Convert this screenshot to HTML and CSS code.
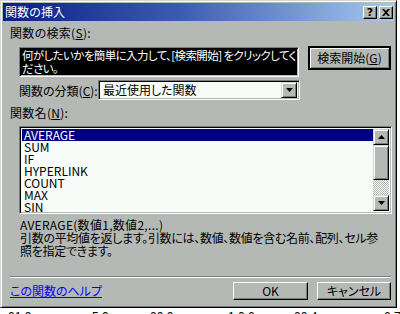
FILE: index.html
```html
<!DOCTYPE html>
<html lang="ja">
<head>
  <meta charset="UTF-8" />
  <title>関数の挿入</title>
  <link rel="stylesheet" href="styles.css">
</head>
<body>
  <div class="dialog">
    <div class="titlebar">
      <span class="title">関数の挿入</span>
      <div class="title-buttons">
        <div class="tbtn">?</div>
        <div class="tbtn">
          <svg width="8" height="7" viewBox="0 0 8 7"><path d="M0 0h2l2 2 2-2h2L5 3.5 8 7H6L4 5 2 7H0l3-3.5z" fill="#000"/></svg>
        </div>
      </div>
    </div>

    <div class="content">
      <!-- Search -->
      <div class="label">関数の検索(<u>S</u>):</div>
      <div class="search-row">
        <div class="field search-box">何がしたいかを簡単に入力して、[検索開始] をクリックしてく<br>ださい。</div>
        <div class="btn default-btn">検索開始(<u>G</u>)</div>
      </div>

      <!-- Category -->
      <div class="category-row">
        <span class="cat-label">関数の分類(<u>C</u>):</span>
        <div class="field combo">
          <span class="combo-text">最近使用した関数</span>
          <div class="combo-btn">
            <svg width="7" height="4" viewBox="0 0 7 4"><path d="M0 0h7L3.5 4z" fill="#000"/></svg>
          </div>
        </div>
      </div>

      <!-- Function list -->
      <div class="label list-label">関数名(<u>N</u>):</div>
      <div class="field list">
        <div class="rows">
          <div class="row selected">AVERAGE</div>
          <div class="row">SUM</div>
          <div class="row">IF</div>
          <div class="row">HYPERLINK</div>
          <div class="row">COUNT</div>
          <div class="row">MAX</div>
          <div class="row">SIN</div>
        </div>
        <div class="scrollbar">
          <div class="sb-btn">
            <svg width="7" height="4" viewBox="0 0 7 4"><path d="M0 4h7L3.5 0z" fill="#000"/></svg>
          </div>
          <div class="sb-thumb"></div>
          <div class="sb-track"></div>
          <div class="sb-btn">
            <svg width="7" height="4" viewBox="0 0 7 4"><path d="M0 0h7L3.5 4z" fill="#000"/></svg>
          </div>
        </div>
      </div>

      <!-- Description -->
      <div class="syntax">AVERAGE(数値1,数値2,...)</div>
      <div class="desc">引数の平均値を返します。引数には、数値、数値を含む名前、配列、セル参<br>照を指定できます。</div>

      <div class="separator"></div>

      <div class="footer">
        <a class="help-link" href="#">この関数のヘルプ</a>
        <div class="footer-buttons">
          <div class="btn ok-btn">OK</div>
          <div class="btn cancel-btn">キャンセル</div>
        </div>
      </div>
    </div>
  </div>

  <!-- spreadsheet peeking out below the dialog -->
  <div class="sheet">
    <span class="c1">01.0</span><span class="c2">5.0</span><span class="c3">00.0</span><span class="c4">1.0.0</span><span class="c5">00.4</span><span class="c6">0.7</span>
  </div>
</body>
</html>
```

FILE: styles.css
```css
/* Win98 style dialog */
* {
  box-sizing: border-box;
}
body {
  margin: 0;
  background: #ffffff;
  width: 400px;
  height: 314px;
  overflow: hidden;
  font-family: "Noto Sans CJK JP", "Liberation Sans", sans-serif;
  font-size: 12px;
  font-feature-settings: "palt";
  color: #000;
}
u {
  text-decoration: underline;
  text-underline-offset: 1px;
}
.dialog {
  width: 397px;
  height: 308px;
  background: #b5b9b5;
  border: 1px solid;
  border-color: #d4d8d4 #000 #000 #d4d8d4;
  box-shadow: inset 1px 1px #fff, inset -1px -1px #7b7d7b;
  padding: 2px;
  display: flex;
  flex-direction: column;
}
.titlebar {
  height: 18px;
  background: linear-gradient(90deg, #0a1e84 0%, #3a5cb0 45%, #a6caf0 100%);
  display: flex;
  align-items: center;
  justify-content: space-between;
  padding: 0 1px 0 2px;
}
.title {
  color: #fff;
  font-size: 12px;
  line-height: 18px;
  font-feature-settings: normal;
}
.title-buttons {
  display: flex;
  gap: 2px;
}
.tbtn {
  width: 14px;
  height: 13px;
  background: #b5b9b5;
  border: 1px solid;
  border-color: #fff #000 #000 #fff;
  box-shadow: inset -1px -1px #7b7d7b;
  display: flex;
  align-items: center;
  justify-content: center;
  font-family: "DejaVu Sans", sans-serif;
  font-weight: bold;
  font-size: 11px;
  line-height: 11px;
}
.content {
  padding: 5px 0 0 7px;
  display: flex;
  flex-direction: column;
}
.label {
  line-height: 14px;
  height: 14px;
  letter-spacing: 0.3px;
  white-space: nowrap;
}
/* sunken field */
.field {
  border: 1px solid;
  border-color: #7b7d7b #fff #fff #7b7d7b;
  box-shadow: inset 1px 1px #000, inset -1px -1px #b5b9b5;
}
.search-row {
  display: flex;
  align-items: flex-start;
  gap: 10px;
  margin: 7px 0 0 9px;
}
.search-box {
  width: 280px;
  height: 30px;
  background: #000;
  color: #fff;
  padding: 1px 2px;
  font-size: 11.5px;
  letter-spacing: -0.6px;
  line-height: 13px;
  white-space: nowrap;
  overflow: hidden;
}
.btn {
  background: #b5b9b5;
  border: 1px solid;
  border-color: #fff #000 #000 #fff;
  box-shadow: inset -1px -1px #7b7d7b;
  display: flex;
  align-items: center;
  justify-content: center;
  line-height: 14px;
  white-space: nowrap;
}
.default-btn {
  width: 81px;
  height: 22px;
  outline: 1px solid #000;
  outline-offset: 0;
  border-color: #000;
  box-shadow: inset 1px 1px #fff, inset -1px -1px #7b7d7b;
}
.category-row {
  display: flex;
  align-items: center;
  margin: 3px 0 0 9px;
}
.cat-label {
  width: 79px;
  flex-shrink: 0;
  white-space: nowrap;
}
.combo {
  width: 202px;
  height: 20px;
  background: #f8fcf8;
  display: flex;
  align-items: center;
  justify-content: space-between;
  padding: 2px;
}
.combo-text {
  padding-left: 2px;
  line-height: 14px;
}
.combo-btn {
  width: 16px;
  height: 16px;
  background: #b5b9b5;
  border: 1px solid;
  border-color: #d4d8d4 #000 #000 #d4d8d4;
  box-shadow: inset 1px 1px #fff, inset -1px -1px #7b7d7b;
  display: flex;
  align-items: center;
  justify-content: center;
}
.list-label {
  margin-top: 6px;
}
.list {
  width: 373px;
  height: 88px;
  margin: 6px 0 0 9px;
  background: #f8fcf8;
  padding: 2px;
  display: flex;
}
.rows {
  flex: 1;
}
.row {
  height: 12px;
  line-height: 12px;
  padding-left: 2px;
}
.row.selected {
  background: #000080;
  color: #fff;
}
.scrollbar {
  width: 16px;
  display: flex;
  flex-direction: column;
}
.sb-btn,
.sb-thumb {
  background: #b5b9b5;
  border: 1px solid;
  border-color: #d4d8d4 #000 #000 #d4d8d4;
  box-shadow: inset 1px 1px #fff, inset -1px -1px #7b7d7b;
}
.sb-btn {
  height: 16px;
  display: flex;
  align-items: center;
  justify-content: center;
}
.sb-thumb {
  height: 36px;
}
.sb-track {
  height: 16px;
  background-color: #f8fcf8;
  background-image: repeating-conic-gradient(#b5b9b5 0 25%, #f8fcf8 0 50%);
  background-size: 2px 2px;
}
.syntax {
  margin: 4px 0 0 10px;
  line-height: 13px;
  letter-spacing: 0.3px;
}
.desc {
  margin-left: 10px;
  line-height: 13px;
  white-space: nowrap;
  letter-spacing: -0.3px;
}
.separator {
  width: 381px;
  height: 2px;
  margin-top: 19px;
  border-top: 1px solid #7b7d7b;
  border-bottom: 1px solid #fff;
}
.footer {
  display: flex;
  align-items: center;
  justify-content: space-between;
  margin-top: 4px;
  padding-right: 3px;
}
.help-link {
  color: #0000ff;
  text-decoration: underline;
  line-height: 14px;
}
.footer-buttons {
  display: flex;
  gap: 9px;
}
.ok-btn {
  width: 75px;
  height: 18px;
}
.cancel-btn {
  width: 74px;
  height: 18px;
}
.sheet {
  height: 6px;
  overflow: hidden;
  position: relative;
  font-family: "Liberation Sans", sans-serif;
  font-size: 12px;
}
.sheet span {
  position: absolute;
  top: 3px;
  line-height: 12px;
}
.c1 { left: 8px; }
.c2 { left: 92px; }
.c3 { left: 150px; }
.c4 { left: 228px; }
.c5 { left: 294px; }
.c6 { left: 384px; }
```
